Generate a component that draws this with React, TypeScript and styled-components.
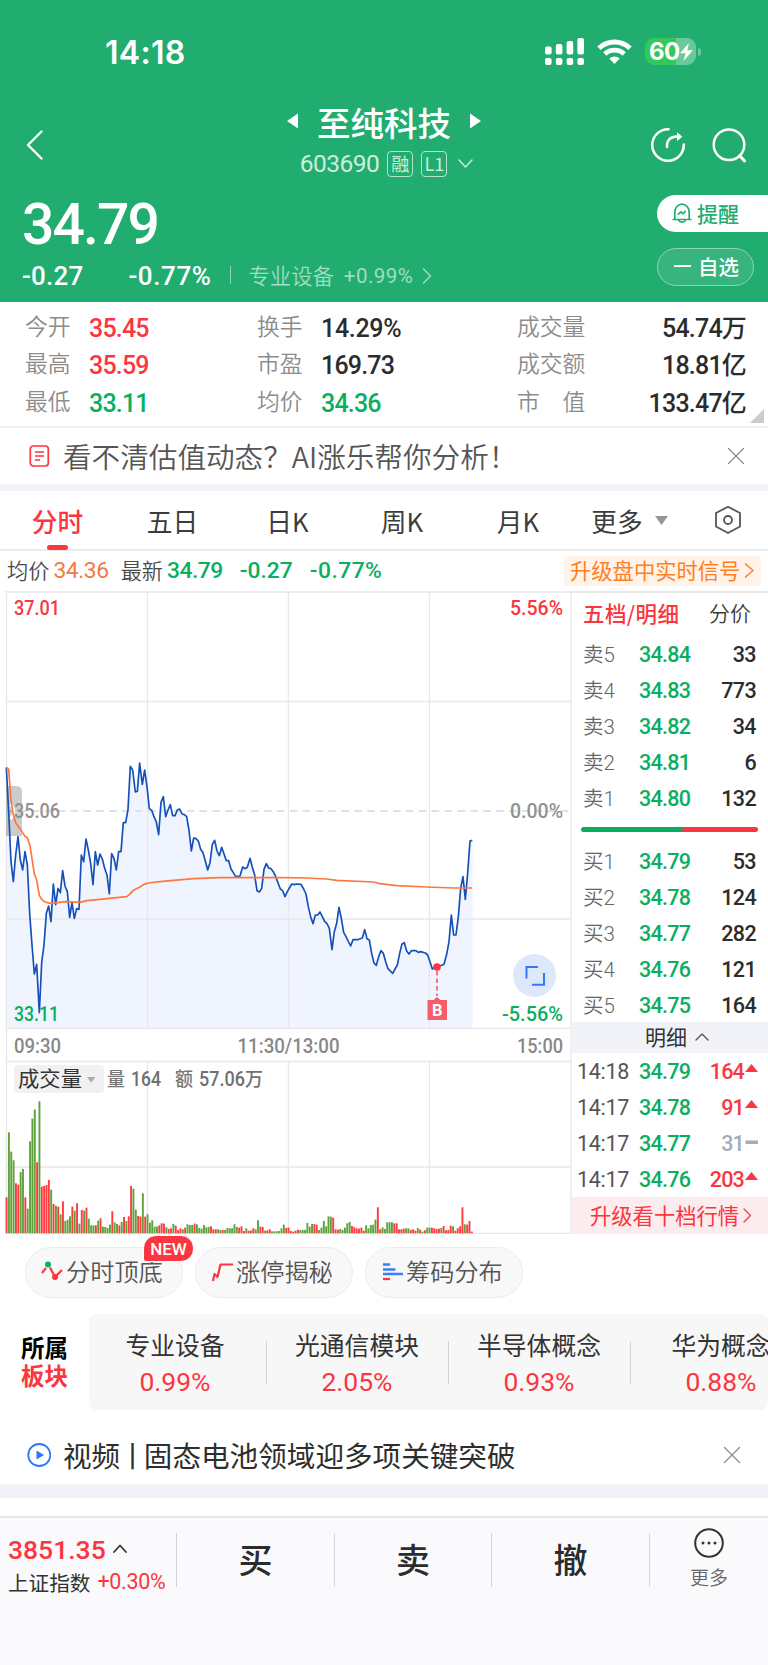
import React from "react";
import styled, { createGlobalStyle, css } from "styled-components";

const RED = "#fb3640";
const GREEN = "#0aae60";
const HEADER = "#22ad70";
const CJK = '"Noto Sans CJK SC", sans-serif';

const Global = createGlobalStyle`
  * { box-sizing: border-box; }
  body { margin: 0; background: #fff; font-family: ${CJK}; color: #333; }
  svg { display: block; flex: none; }
`;

const Page = styled.main`
  width: 768px;
  height: 1665px;
  overflow: hidden;
  display: flex;
  flex-direction: column;
`;

const Num = styled.span<{ $size: number; $ls?: number; $color?: string; $w?: number }>`
  font-family: Roboto, ${CJK};
  font-weight: ${(p) => p.$w ?? 500};
  font-size: ${(p) => p.$size}px;
  letter-spacing: ${(p) => p.$ls ?? 0}px;
  line-height: 1;
  white-space: nowrap;
  color: ${(p) => p.$color ?? "inherit"};
`;

const Txt = styled.span<{ $size: number; $ls?: number; $color?: string; $w?: number }>`
  font-size: ${(p) => p.$size}px;
  letter-spacing: ${(p) => p.$ls ?? 0}px;
  font-weight: ${(p) => p.$w ?? 400};
  line-height: 1;
  white-space: nowrap;
  color: ${(p) => p.$color ?? "inherit"};
`;

const Pad = styled.i<{ $w?: number }>`
  flex: none;
  width: ${(p) => p.$w ?? 12}px;
`;

/* ---------- header ---------- */

const Header = styled.header`
  height: 302px;
  background: ${HEADER};
  color: #fff;
  display: flex;
  flex-direction: column;
`;

const StatusBar = styled.div`
  height: 103px;
  padding: 0 67px 0 105px;
  display: flex;
  justify-content: space-between;
  align-items: center;
`;

const Clock = styled.span`
  font: 600 32px/1 Inter, sans-serif;
  letter-spacing: 0.3px;
  padding-top: 2px;
`;

const StatusIcons = styled.div`
  display: flex;
  align-items: center;
  gap: 13px;
`;

const Battery = styled.div`
  width: 51px;
  height: 27px;
  border-radius: 9px;
  background: linear-gradient(90deg, #34c759 60%, #69c99b 60%);
  display: flex;
  align-items: center;
  padding-left: 4px;
  font: 700 24px/1 Inter, sans-serif;
  letter-spacing: -0.5px;
`;

const BatteryWrap = styled.div`
  display: flex;
  align-items: center;
  gap: 2px;
  &::after {
    content: "";
    width: 3px;
    height: 8px;
    border-radius: 0 3px 3px 0;
    background: #69c99b;
  }
`;

const Nav = styled.div`
  height: 84px;
  display: grid;
  grid-template-columns: 1fr auto 1fr;
  grid-template-rows: 84px;
  align-items: center;
  padding: 0 21px 0 26px;
`;

const NavCenter = styled.div`
  display: flex;
  flex-direction: column;
  align-items: center;
  padding: 0 5px 5px 0;
`;

const TitleRow = styled.div`
  display: flex;
  align-items: center;
  gap: 18px;
  height: 43px;
`;

const TitleText = styled.h1`
  margin: 0;
  padding-bottom: 3px;
  font-size: 33.5px;
  line-height: 1;
  font-weight: 500;
`;

const CodeRow = styled.div`
  display: flex;
  align-items: center;
  gap: 8px;
  height: 39px;
  color: #cdeedd;
  padding-left: 7px;
`;

const Tag = styled.span`
  width: 26px;
  height: 26px;
  border: 1.5px solid #b5e2cd;
  border-radius: 4px;
  font-size: 18px;
  line-height: 23px;
  text-align: center;
  white-space: nowrap;
`;

const NavActions = styled.div`
  display: flex;
  justify-content: flex-end;
  gap: 25px;
`;

const Quote = styled.div`
  flex: 1;
  display: flex;
  justify-content: space-between;
`;

const QuoteLeft = styled.div`
  padding: 9px 0 0 22px;
`;

const Changes = styled.div`
  display: flex;
  align-items: center;
  height: 28px;
  margin-top: 9px;
`;

const Sector = styled.div`
  display: flex;
  align-items: center;
  gap: 10px;
  color: #a3dcc2;
  margin-left: 18px;
  padding-left: 19px;
  position: relative;
  &::before {
    content: "";
    position: absolute;
    left: 0;
    top: 2px;
    height: 18px;
    width: 1px;
    background: #8fd4b4;
  }
`;

const SectorName = styled.span`
  font-size: 21.3px;
  line-height: 1;
  font-weight: 350;
  padding-bottom: 2px;
`;

const QuoteRight = styled.div`
  width: 111px;
  padding-top: 8px;
`;

const Remind = styled.button`
  width: 111px;
  height: 37px;
  border: 0;
  border-radius: 19px 0 0 19px;
  background: #fff;
  color: ${HEADER};
  display: flex;
  align-items: center;
  gap: 5px;
  padding: 0 0 1px 15px;
  font-family: ${CJK};
`;

const Watch = styled.button`
  width: 97px;
  height: 38px;
  margin-top: 16px;
  border: 1px solid #8ed3b3;
  border-radius: 19px;
  background: #38b57e;
  color: #fff;
  display: flex;
  align-items: center;
  gap: 7px;
  padding: 0 0 2px 16px;
  font-family: ${CJK};
`;

/* ---------- stats ---------- */

const Stats = styled.section`
  height: 126px;
  padding: 6px 22px 0 25px;
  border-bottom: 2px solid #efeff0;
  display: grid;
  grid-template-columns: 232px 260px 1fr;
  grid-auto-rows: 37.5px;
  position: relative;
`;

const Stat = styled.div<{ $wide?: boolean }>`
  display: flex;
  align-items: center;
  height: 38px;
  padding-top: 2px;
  ${(p) => p.$wide && css`justify-content: space-between;`}
`;

const StatLabel = styled.span<{ $wide?: boolean }>`
  width: ${(p) => (p.$wide ? 72 : 64)}px;
  font-size: 22.8px;
  line-height: 1;
  font-weight: 350;
  color: #8c8c8c;
  white-space: pre;
  padding-bottom: 4px;
`;

const Corner = styled.i`
  position: absolute;
  right: 4px;
  bottom: 3px;
  border-left: 14px solid transparent;
  border-bottom: 14px solid #ccc;
`;

/* ---------- banners ---------- */

const Banner = styled.section<{ $h: number; $top?: number; $right: number }>`
  height: ${(p) => p.$h}px;
  display: flex;
  align-items: center;
  padding: ${(p) => p.$top ?? 0}px ${(p) => p.$right}px 0 27px;
`;

const Grow = styled.div`
  flex: 1;
`;

const Bar = styled.span`
  letter-spacing: -4px;
  margin-left: -2px;
  margin-right: 1px;
`;

const Band = styled.div<{ $h: number }>`
  height: ${(p) => p.$h}px;
  background: #f2f3f8;
`;

/* ---------- tabs ---------- */

const Tabs = styled.nav`
  height: 60px;
  border-bottom: 2px solid #ebebeb;
  display: grid;
  grid-template-columns: 115px 115px 115px 114px 118px 105px 92px;
  align-items: center;
`;

const Tab = styled.button<{ $active?: boolean }>`
  position: relative;
  border: 0;
  background: none;
  padding: 0;
  height: 58px;
  display: flex;
  align-items: center;
  justify-content: center;
  gap: 12px;
  font-family: ${CJK};
  font-size: 25.7px;
  font-weight: ${(p) => (p.$active ? 500 : 400)};
  color: ${(p) => (p.$active ? RED : "#3c3c3c")};
  white-space: nowrap;
  ${(p) =>
    p.$active &&
    css`
      &::after {
        content: "";
        position: absolute;
        bottom: -1px;
        left: 47px;
        width: 21px;
        height: 5px;
        border-radius: 3px;
        background: ${RED};
      }
    `}
`;

const InfoRow = styled.div`
  height: 40px;
  display: flex;
  align-items: center;
  padding: 0 7px;
`;

const InfoLabel = styled.span`
  font-size: 21.2px;
  line-height: 1;
  font-weight: 350;
  color: #4a4a4a;
  padding-bottom: 2px;
`;

const Signal = styled.button`
  height: 30px;
  width: 197px;
  border: 0;
  border-radius: 4px;
  background: #fff3ea;
  display: flex;
  align-items: center;
  gap: 5px;
  padding: 0 0 2px 6px;
  margin-left: auto;
  font-family: ${CJK};
`;

/* ---------- market ---------- */

const Market = styled.section`
  height: 643px;
  display: flex;
`;

const ChartPane = styled.div`
  width: 572px;
  height: 643px;
`;

const BookPane = styled.aside`
  width: 196px;
  border-top: 2px solid #e8e8e8;
`;

const BookTabs = styled.div`
  height: 44px;
  display: flex;
  align-items: center;
  justify-content: space-between;
  padding: 0 17px 5px 11px;
`;

const Rows = styled.div<{ $h: number }>`
  height: ${(p) => p.$h}px;
`;

const Row = styled.div`
  height: 36px;
  display: grid;
  grid-template-columns: 56px 62px 1fr;
  align-items: center;
  padding: 0 12px 0 11px;
`;

const LevelName = styled.span`
  font: 350 20.5px/1 Roboto, ${CJK};
  color: #666;
`;

const Right = styled.div`
  display: flex;
  justify-content: flex-end;
  align-items: center;
`;

const RatioWrap = styled.div`
  height: 27px;
  padding: 10px 10px 0 9px;
`;

const Ratio = styled.div`
  height: 5px;
  border-radius: 3px;
  background: linear-gradient(135deg, ${GREEN} 0 57.5%, ${RED} 57.5%);
`;

const DetailHead = styled.div`
  height: 31px;
  background: #f2f3f9;
  display: flex;
  align-items: center;
  justify-content: center;
  gap: 8px;
  padding: 0 0 2px 14px;
`;

const TickRow = styled.div`
  height: 36px;
  display: grid;
  grid-template-columns: 62px 62px 1fr;
  align-items: center;
  padding: 2px 10px 0 5px;
`;

const TenLevels = styled.button`
  width: 196px;
  height: 37px;
  border: 0;
  background: #fdeced;
  display: flex;
  align-items: center;
  gap: 4px;
  padding: 0 0 1px 18px;
  font-family: ${CJK};
`;

/* ---------- shortcuts ---------- */

const Pills = styled.section`
  display: flex;
  gap: 12px;
  padding: 13px 25px 0;
  height: 80px;
`;

const Pill = styled.button`
  position: relative;
  width: 158px;
  height: 51px;
  border: 1px solid #ececec;
  border-radius: 26px;
  background: #f8f8f8;
  display: flex;
  align-items: center;
  gap: 3px;
  padding: 0 0 2px 15px;
  font-family: ${CJK};
`;

const NewBadge = styled.span`
  position: absolute;
  right: -12px;
  top: -13px;
  width: 51px;
  height: 27px;
  border: 1px solid #fff;
  border-radius: 13px 13px 13px 3px;
  background: ${RED};
  color: #fff;
  font: 500 17px/26px Roboto, sans-serif;
  text-align: center;
`;

const Boards = styled.section`
  height: 96px;
  display: flex;
`;

const BoardTitle = styled.div`
  width: 89px;
  display: flex;
  flex-direction: column;
  align-items: center;
  justify-content: center;
  font-size: 23.5px;
  line-height: 28px;
  font-weight: 700;
  color: #000;
  padding-bottom: 3px;
`;

const BoardTitleAccent = styled.span`
  color: ${RED};
`;

const BoardList = styled.div`
  width: 679px;
  background: #f7f7f8;
  border-radius: 8px;
  display: flex;
  overflow: hidden;
`;

const Board = styled.div<{ $first?: boolean }>`
  flex: none;
  width: ${(p) => (p.$first ? 177 : 182)}px;
  padding: ${(p) => (p.$first ? "3px 5px 0 0" : "3px 0 0")};
  display: flex;
  flex-direction: column;
  align-items: center;
  justify-content: center;
  gap: 12px;
  position: relative;
  &:not(:first-child)::before {
    content: "";
    position: absolute;
    left: 0;
    top: 27px;
    width: 1px;
    height: 43px;
    background: #d4d4d4;
  }
`;

/* ---------- footer ---------- */

const Footer = styled.footer`
  margin-top: 18px;
  flex: 1;
  border-top: 2px solid #e8e8ea;
  background: #fafafc;
  display: flex;
`;

const IndexBox = styled.div`
  width: 176px;
  padding: 19px 0 0 8px;
`;

const IndexLine = styled.div<{ $h: number; $gap: number }>`
  height: ${(p) => p.$h}px;
  display: flex;
  align-items: center;
  gap: ${(p) => p.$gap}px;
`;

const Action = styled.button<{ $w: number }>`
  width: ${(p) => p.$w}px;
  height: 54px;
  margin-top: 15px;
  border: 0;
  border-left: 1px solid #d6d6d8;
  background: none;
  padding: 0 0 3px;
  display: flex;
  justify-content: center;
  align-items: center;
  font-family: ${CJK};
`;

const More = styled.div`
  flex: 1;
  height: 54px;
  margin-top: 15px;
  border-left: 1px solid #d6d6d8;
`;

const MoreInner = styled.div`
  margin-top: -5px;
  display: flex;
  flex-direction: column;
  align-items: center;
  gap: 9px;
`;

/* ---------- icons ---------- */

const Chevron = ({ w, h, d, color = "currentColor", sw = 1.6 }: { w: number; h: number; d: string; color?: string; sw?: number }) => (
  <svg width={w} height={h} viewBox={`0 0 ${w} ${h}`} fill="none" stroke={color} strokeWidth={sw} strokeLinecap="round" strokeLinejoin="round">
    <path d={d} />
  </svg>
);

const Close = () => <Chevron w={18} h={18} d="M1.5 1.5L16.5 16.5M16.5 1.5L1.5 16.5" color="#8d8d8d" sw={1.3} />;

const SignalIcon = () => (
  <svg width="39" height="27" fill="#fff">
    {[8, 10.5, 13.5, 16.5].map((h, i) => (
      <g key={i}>
        <rect x={i * 10.8} y={16.5 - h} width="6.6" height={h} rx="2" />
        <rect x={i * 10.8} y="20" width="6.6" height="7" rx="2" />
      </g>
    ))}
  </svg>
);

const WifiIcon = () => (
  <svg width="35" height="25" viewBox="0 0 35 25" fill="none" stroke="#fff">
    <path d="M2 9.3a22.5 22.5 0 0 1 31 0" strokeWidth="5" />
    <path d="M7.8 15a14.2 14.2 0 0 1 19.4 0" strokeWidth="4.8" />
    <path d="M12.3 19.6a7.6 7.6 0 0 1 10.4 0L17.5 25z" fill="#fff" stroke="none" />
  </svg>
);

const ShareIcon = () => (
  <svg width="36" height="36" viewBox="0 0 36 36" fill="none" stroke="#fff" strokeWidth="2.5" strokeLinecap="round">
    <path d="M18.5 2.2A15.8 15.8 0 1 0 33.8 17.5" />
    <path d="M17 20C16.5 13.5 20 9.7 27 9.6" />
    <path d="M27 5.2L32.4 9.7L27 14z" fill="#fff" stroke="none" />
  </svg>
);

const SearchIcon = () => (
  <svg width="36" height="36" viewBox="0 0 36 36" fill="none" stroke="#fff" strokeWidth="2.5" strokeLinecap="round">
    <circle cx="18" cy="17.8" r="15.3" />
    <path d="M28.5 28.5L33.5 34" strokeWidth="3" />
  </svg>
);

const BellIcon = () => (
  <svg width="20" height="21" viewBox="0 0 20 21" fill="none" stroke={HEADER} strokeWidth="1.7" strokeLinecap="round" strokeLinejoin="round">
    <path d="M1.2 16.5H18.8M2.8 16.3V9A7.2 7.8 0 0 1 17.2 9V16.3M6.5 17A3.7 3 0 0 0 13.5 17" />
    <path d="M6.3 11.2L9 8.8L10.7 10.8L13.3 8.3" />
  </svg>
);

/* ---------- chart data ---------- */

// Chart geometry is kept in thirds of a pixel, y measured from the 149px mark of the plot.
const PRICE =
  "19,82 26,215 33,365 40,425 47,345 54,290 61,360 68,390 75,335 82,375 89,520 96,615 103,702 110,673 118,818 125,668 132,615 139,520 146,498 153,545 160,432 167,494 174,445 181,458 188,392 195,438 202,455 209,532 216,488 223,535 230,506 237,508 244,345 251,365 258,297 265,330 272,370 279,434 286,335 293,375 300,342 307,357 314,385 321,405 328,462 335,341 342,355 349,390 356,335 363,335 370,248 377,248 384,208 391,79 398,90 406,156 412,154 419,69 427,133 434,90 441,140 448,206 455,211 462,230 469,246 476,284 483,187 490,170 497,230 504,210 511,194 518,227 525,227 532,210 539,207 546,221 553,224 560,230 567,270 574,333 581,294 588,296 595,303 602,328 609,338 616,363 623,390 630,368 637,313 644,301 651,333 658,347 665,322 672,342 679,362 686,362 693,387 700,398 707,410 720,408 728,381 735,386 742,382 750,355 757,382 764,405 771,452 778,456 785,445 792,388 799,371 806,384 813,386 820,395 827,410 841,447 848,452 855,470 862,455 875,432 882,434 890,432 903,433 911,447 918,462 925,500 932,530 939,551 946,525 953,525 960,516 967,530 974,544 981,551 988,565 996,629 1003,575 1010,550 1017,502 1024,535 1031,577 1038,590 1052,618 1059,599 1073,599 1087,594 1094,569 1101,596 1108,600 1115,640 1122,669 1129,676 1136,650 1143,632 1150,640 1157,665 1164,686 1178,700 1192,675 1199,640 1206,612 1213,608 1220,633 1227,642 1234,632 1248,632 1255,637 1262,635 1276,639 1283,645 1290,665 1297,687 1304,682 1311,681 1325,676 1332,673 1340,643 1347,605 1354,525 1361,585 1368,585 1375,530 1382,445 1389,410 1396,478 1403,400 1410,303 1417,301";
const AVERAGE =
  "19,82 26,88 33,180 40,225 47,248 60,266 75,289 82,293 90,317 103,402 110,420 118,466 125,478 135,486 150,490 170,488 200,485 240,487 260,482 300,478 380,470 388,464 400,451 420,441 430,434 445,429 480,425 520,421 580,416 660,413 850,413 920,414 980,417 1010,421 1120,426 1140,431 1190,437 1280,441 1360,444 1417,444";
const VOLUME =
  "R108 G303 G245 G219 R150 R146 G184 G193 R108 G74 G276 G344 G371 R213 G396 R140 R142 R145 R160 G131 R88 G83 R80 G57 R96 G37 G41 G51 R80 G68 R90 G29 R70 G68 R77 G44 G24 G24 R24 G38 R45 G20 G19 G16 G26 R66 G33 G28 R24 G34 R49 G37 R51 R142 G134 G71 R52 R50 G120 R50 G57 G32 G39 G20 G20 R24 R30 R29 G18 R13 R15 G28 R23 R10 R15 G12 R17 G27 G25 G25 R29 G27 G16 G14 G25 G18 G19 R21 R12 R12 G12 G10 R10 G10 G16 G15 G15 G27 G19 R17 R21 R7 G15 R8 R8 R15 G12 G39 R20 R19 G8 R9 R12 G6 G6 G6 G7 G15 G26 R16 R17 R7 R5 R8 R11 G10 G10 G10 G31 G20 G28 R28 R26 G10 G17 G37 G21 G51 G50 R47 R12 R11 G13 G10 G17 G30 G34 R22 R18 R15 R14 R17 R8 G24 G15 G25 G26 G41 R78 R12 G18 G13 G33 G33 G33 R30 R30 R12 R12 R14 G15 G15 R10 R12 R8 G16 R11 G5 R9 G17 G17 R17 R15 R13 R14 G16 R22 R9 R10 R23 G21 R8 R15 R21 R78 G27 R26 R37 R5".split(" ");

type LabelProps = { x: number; y: number; w: number; color: string; size?: number; end?: boolean; weight?: number; children: string };
const Label = ({ x, y, w, color, size = 19.5, end, weight = 500, children }: LabelProps) => (
  <text x={end ? x - w : x} y={y} textLength={w} lengthAdjust="spacingAndGlyphs" fill={color} fontFamily={`Roboto, ${CJK}`} fontSize={size} fontWeight={weight}>
    {children}
  </text>
);

const Chart = () => (
  <svg width="572" height="643" viewBox="0 0 572 643">
    <g transform="translate(0 149) scale(.33333)">
      <path d={`M19,865 L${PRICE} L1418,865Z`} fill="#f0f4fe" />
    </g>
    <g stroke="#e8e8e8" strokeWidth="1.3" fill="none">
      <path d="M6 1H572M6.5 0V643M571 0V643M6 110.5H571M6 328H571M6 437.3H571M6 470.5H571M6 576H571M6 642.3H571" />
      <path d="M147.5 1V437M288.4 1V437M429.4 1V437M147.5 470V642M288.4 470V642M429.4 470V642" />
    </g>
    <path d="M6 220H571" stroke="#dae3ea" strokeWidth="1.8" strokeDasharray="7.6 5.3" />
    <path d="M6 195H16Q22 195 22 201V245H6Z" fill="#000" fillOpacity=".2" />
    <path d="M10.5 213Q17 220.5 10.5 228" fill="none" stroke="#fff" strokeWidth="3" />
    <Label x={14} y={227} w={46} color="#929292">35.06</Label>
    <Label x={563} y={227} w={53} color="#929292" end>0.00%</Label>
    <Label x={14} y={24} w={46} color={RED}>37.01</Label>
    <Label x={563} y={24} w={53} color={RED} end>5.56%</Label>
    <Label x={14} y={429.5} w={45} color={GREEN}>33.11</Label>
    <Label x={563} y={429.5} w={61} color={GREEN} end>-5.56%</Label>
    <g transform="translate(0 149) scale(.33333)" fill="none" strokeLinejoin="round">
      <polyline points={PRICE} stroke="#1450b8" strokeWidth="5" />
      <polyline points={AVERAGE} stroke="#fc7840" strokeWidth="5" />
    </g>
    <path d="M437 380V405" stroke={RED} strokeWidth="1.3" strokeDasharray="4.5 3" />
    <circle cx="437" cy="376" r="3.8" fill={RED} />
    <path d="M427.5 409H433.5L437 406L440.5 409H447V429H427.5Z" fill="#f65d68" />
    <text x="437.3" y="424.5" textAnchor="middle" fill="#fff" fontFamily="Roboto" fontWeight="700" fontSize="16.5">B</text>
    <circle cx="534.5" cy="384.5" r="21.5" fill="#dee8fd" />
    <path d="M526.5 387.5V376H538M544 382V393.7H532" fill="none" stroke="#3478f6" strokeWidth="2" />
    <Label x={14} y={461.5} w={47} color="#888">09:30</Label>
    <Label x={237.5} y={461.5} w={102} color="#888">11:30/13:00</Label>
    <Label x={563} y={461.5} w={46} color="#888" end>15:00</Label>
    <rect x="14" y="474" width="90" height="28" rx="4" fill="#f1f1f1" />
    <Label x={18} y={495} w={64} color="#333" size={21} weight={400}>成交量</Label>
    <path d="M87 486H95.5L91.2 491.5Z" fill="#aaa" />
    <Label x={107} y={494.5} w={18} color="#777" size={19}>量</Label>
    <Label x={131} y={494.5} w={30} color="#707070" size={19.5}>164</Label>
    <Label x={175} y={494.5} w={18} color="#777" size={19}>额</Label>
    <Label x={199} y={494.5} w={64} color="#707070" size={19.5}>57.06万</Label>
    {VOLUME.map((v, i) => {
      const h = Number(v.slice(1)) / 3;
      return <rect key={i} x={5.6 + i * 2.35} y={642.3 - h} width="1.9" height={h} fill={v[0] === "R" ? "#ff3b40" : "#5da23a"} />;
    })}
  </svg>
);

/* ---------- content ---------- */

const STATS = [
  ["今开", "35.45", RED], ["换手", "14.29%", "#2c2c2c"], ["成交量", "54.74万", "#2c2c2c"],
  ["最高", "35.59", RED], ["市盈", "169.73", "#2c2c2c"], ["成交额", "18.81亿", "#2c2c2c"],
  ["最低", "33.11", GREEN], ["均价", "34.36", GREEN], ["市\u3000值", "133.47亿", "#2c2c2c"],
];
const SELLS = [["卖5", "34.84", "33"], ["卖4", "34.83", "773"], ["卖3", "34.82", "34"], ["卖2", "34.81", "6"], ["卖1", "34.80", "132"]];
const BUYS = [["买1", "34.79", "53"], ["买2", "34.78", "124"], ["买3", "34.77", "282"], ["买4", "34.76", "121"], ["买5", "34.75", "164"]];
const TICKS = [["14:18", "34.79", "164", "up"], ["14:17", "34.78", "91", "up"], ["14:17", "34.77", "31", "flat"], ["14:17", "34.76", "203", "up"]];
const BOARDS = [["专业设备", "0.99%"], ["光通信模块", "2.05%"], ["半导体概念", "0.93%"], ["华为概念", "0.88%"]];

const Levels = ({ rows, h }: { rows: string[][]; h: number }) => (
  <Rows $h={h}>
    {rows.map(([n, p, v]) => (
      <Row key={n}>
        <LevelName>{n}</LevelName>
        <Num $size={21.5} $ls={-0.7} $color={GREEN}>{p}</Num>
        <Right><Num $size={21.5} $ls={-0.6} $color="#2c2c2c">{v}</Num></Right>
      </Row>
    ))}
  </Rows>
);

export default function App() {
  return (
    <>
      <Global />
      <Page>
        <Header>
          <StatusBar>
            <Clock>14:18</Clock>
            <StatusIcons>
              <SignalIcon />
              <WifiIcon />
              <BatteryWrap>
                <Battery>
                  60
                  <svg width="13" height="18" viewBox="0 0 13 18" fill="#fff"><path d="M9 0L0 10.3H5.5L3.5 18L13 7.3H7.3Z" /></svg>
                </Battery>
              </BatteryWrap>
            </StatusIcons>
          </StatusBar>
          <Nav>
            <Chevron w={18} h={30} d="M15.5 1.5L2 15L15.5 28.5" sw={2.4} />
            <NavCenter>
              <TitleRow>
                <svg width="12" height="20" viewBox="0 0 12 20" fill="#fff"><path d="M0 8L11 .5V15.5Z" /></svg>
                <TitleText>至纯科技</TitleText>
                <svg width="12" height="20" viewBox="0 0 12 20" fill="#fff"><path d="M12 8L1 .5V15.5Z" /></svg>
              </TitleRow>
              <CodeRow>
                <Num $size={24.5} $ls={-0.5} $w={400}>603690</Num>
                <Tag>融</Tag>
                <Tag>L1</Tag>
                <Chevron w={20} h={12} d="M4 2L10.5 9L17 2" sw={1.5} />
              </CodeRow>
            </NavCenter>
            <NavActions>
              <ShareIcon />
              <SearchIcon />
            </NavActions>
          </Nav>
          <Quote>
            <QuoteLeft>
              <Num as="div" $size={57} $ls={-1.9}>34.79</Num>
              <Changes>
                <Num $size={26} $ls={0.2}>-0.27</Num>
                <Pad $w={45} />
                <Num $size={26} $ls={0.6}>-0.77%</Num>
                <Sector>
                  <SectorName>专业设备</SectorName>
                  <Num $size={20.5} $ls={0.5} $w={400}>+0.99%</Num>
                  <Chevron w={10} h={18} d="M0 1.5L7.5 9L0 16.5" sw={1.4} />
                </Sector>
              </Changes>
            </QuoteLeft>
            <QuoteRight>
              <Remind><BellIcon /><Txt $size={21} $w={500}>提醒</Txt></Remind>
              <Watch>
                <svg width="17" height="2" fill="#fff"><rect width="17" height="2" /></svg>
                <Txt $size={20.5} $w={500}>自选</Txt>
              </Watch>
            </QuoteRight>
          </Quote>
        </Header>

        <Stats>
          {STATS.map(([label, value, color], i) => (
            <Stat key={label} $wide={i % 3 === 2}>
              <StatLabel $wide={i % 3 === 2}>{label}</StatLabel>
              <Num $size={25} $ls={value.endsWith("%") ? -0.3 : -0.8} $color={color}>{value}</Num>
            </Stat>
          ))}
          <Corner />
        </Stats>

        <Banner $h={56} $right={23}>
          <svg width="24" height="24" viewBox="0 0 24 24" fill="none" stroke={RED} strokeWidth="1.7">
            <rect x="3.3" y="2" width="18" height="20" rx="3" />
            <path d="M8 8H17M8 12H17M8 16H13" />
          </svg>
          <Pad />
          <Txt $size={28.6} $w={350} $color="#555">看不清估值动态？AI涨乐帮你分析！</Txt>
          <Grow />
          <Close />
        </Banner>
        <Band $h={7} />

        <Tabs>
          <Tab $active>分时</Tab>
          <Tab>五日</Tab>
          <Tab>日K</Tab>
          <Tab>周K</Tab>
          <Tab>月K</Tab>
          <Tab>更多<svg width="13" height="9" fill="#969696"><path d="M0 0H13L6.5 9Z" /></svg></Tab>
          <Tab>
            <svg width="28" height="30" viewBox="0 0 28 30" fill="none" stroke="#555" strokeWidth="1.8" strokeLinejoin="round">
              <path d="M14 1.8L26 8V21.5L14 28L2 21.5V8Z" />
              <circle cx="14" cy="15" r="4" />
            </svg>
          </Tab>
        </Tabs>

        <InfoRow>
          <InfoLabel>均价</InfoLabel>
          <Pad $w={4} />
          <Num $size={22.8} $ls={-0.4} $w={400} $color="#f07c40">34.36</Num>
          <Pad $w={12} />
          <InfoLabel>最新</InfoLabel>
          <Pad $w={4} />
          <Num $size={22.8} $ls={-0.5} $color={GREEN}>34.79</Num>
          <Pad $w={17} />
          <Num $size={22.8} $ls={0} $color={GREEN}>-0.27</Num>
          <Pad $w={17} />
          <Num $size={22.8} $ls={0.5} $color={GREEN}>-0.77%</Num>
          <Signal>
            <Txt $size={21.3} $color="#ff7f22">升级盘中实时信号</Txt>
            <Chevron w={10} h={17} d="M0 1.5L8 8.5L0 15.5" color="#ff7f22" sw={1.5} />
          </Signal>
        </InfoRow>

        <Market>
          <ChartPane><Chart /></ChartPane>
          <BookPane>
            <BookTabs>
              <Txt $size={21.5} $ls={0.4} $w={500} $color={RED}>五档/明细</Txt>
              <Txt $size={21} $w={350} $color="#3c3c3c">分价</Txt>
            </BookTabs>
            <Levels rows={SELLS} h={180} />
            <RatioWrap><Ratio /></RatioWrap>
            <Levels rows={BUYS} h={178} />
            <DetailHead>
              <Txt $size={21} $color="#333">明细</Txt>
              <Chevron w={14} h={8} d="M1 7L7 1L13 7" color="#555" sw={1.4} />
            </DetailHead>
            {TICKS.map(([t, p, v, dir], i) => (
              <TickRow key={i}>
                <Num $size={21.5} $ls={-0.3} $w={400} $color="#555">{t}</Num>
                <Num $size={21.5} $ls={-0.7} $color={GREEN}>{p}</Num>
                <Right>
                  <Num $size={21.5} $ls={-0.8} $color={dir === "up" ? RED : "#a3acb8"}>{v}</Num>
                  <svg width="14" height="16" viewBox="0 0 14 16" fill={dir === "up" ? RED : "#a3acb8"}>
                    {dir === "up" ? <path d="M1 8L7.5 0L14 8Z" /> : <rect x="1.5" y="4.5" width="12.5" height="3.5" />}
                  </svg>
                </Right>
              </TickRow>
            ))}
            <TenLevels>
              <Txt $size={21.3} $color={RED}>升级看十档行情</Txt>
              <Chevron w={9} h={15} d="M1 1L7.5 7.5L1 14" color={RED} sw={1.3} />
            </TenLevels>
          </BookPane>
        </Market>

        <Pills>
          <Pill>
            <svg width="22" height="26" viewBox="0 0 22 26" fill="none" stroke={RED} strokeWidth="2.2">
              <path d="M1 14L5 9M9 8.5L14 18L21 11" />
              <circle cx="7" cy="5.5" r="3" fill={GREEN} stroke="none" />
              <circle cx="14" cy="18" r="3" fill={RED} stroke="none" />
            </svg>
            <Txt $size={24.2} $w={350} $color="#555">分时顶底</Txt>
            <NewBadge>NEW</NewBadge>
          </Pill>
          <Pill>
            <svg width="22" height="26" viewBox="0 0 22 26" fill="none" stroke={RED} strokeWidth="2.2" strokeLinejoin="round">
              <path d="M2 22L3.500 15L6.500 18L9.500 5.500H22" />
            </svg>
            <Txt $size={24.2} $w={350} $color="#555">涨停揭秘</Txt>
          </Pill>
          <Pill>
            <svg width="22" height="26" viewBox="0 0 22 26" fill="none" strokeWidth="2.3">
              <path d="M2 5.5H9M2 10.5H14.5M2 15H22" stroke="#3d7dfa" />
              <path d="M2 20H9" stroke={RED} />
            </svg>
            <Txt $size={24.2} $w={350} $color="#555">筹码分布</Txt>
          </Pill>
        </Pills>

        <Boards>
          <BoardTitle>
            <span>所属</span>
            <BoardTitleAccent>板块</BoardTitleAccent>
          </BoardTitle>
          <BoardList>
            {BOARDS.map(([name, pct], i) => (
              <Board key={name} $first={i === 0}>
                <Txt $size={24.8} $color="#333">{name}</Txt>
                <Num $size={26.5} $ls={0} $w={400} $color={RED}>{pct}</Num>
              </Board>
            ))}
          </BoardList>
        </Boards>

        <Banner $h={74} $top={16} $right={27}>
          <svg width="24" height="24" viewBox="0 0 24 24" fill="none" stroke="#2a78ff" strokeWidth="1.8">
            <circle cx="12.3" cy="12" r="11" />
            <path d="M9.5 7.5V16.5L17 12Z" fill="#2a78ff" stroke="none" />
          </svg>
          <Pad />
          <Txt $size={28.6} $color="#2e2e2e">视频<Bar>丨</Bar>固态电池领域迎多项关键突破</Txt>
          <Grow />
          <Close />
        </Banner>
        <Band $h={14} />

        <Footer>
          <IndexBox>
            <IndexLine $h={26} $gap={7}>
              <Num $size={26.5} $ls={0} $color={RED}>3851.35</Num>
              <Chevron w={14} h={12} d="M1 8L7 1.5L13 8" color="#333" sw={1.8} />
            </IndexLine>
            <IndexLine $h={38} $gap={7}>
              <Txt $size={20.6} $color="#333">上证指数</Txt>
              <Num $size={21.5} $ls={-0.3} $w={400} $color={RED}>+0.30%</Num>
            </IndexLine>
          </IndexBox>
          <Action $w={158}><Txt $size={34} $w={500} $color="#2c2c2c">买</Txt></Action>
          <Action $w={157}><Txt $size={34} $w={500} $color="#2c2c2c">卖</Txt></Action>
          <Action $w={158}><Txt $size={34} $w={500} $color="#2c2c2c">撤</Txt></Action>
          <More>
            <MoreInner>
              <svg width="30" height="30" viewBox="0 0 30 30" fill="none" stroke="#333" strokeWidth="2">
                <circle cx="15" cy="15" r="13.8" />
                <g fill="#333" stroke="none"><circle cx="9" cy="15" r="1.5" /><circle cx="15" cy="15" r="1.5" /><circle cx="21" cy="15" r="1.5" /></g>
              </svg>
              <Txt $size={19} $w={350} $color="#666">更多</Txt>
            </MoreInner>
          </More>
        </Footer>
      </Page>
    </>
  );
}
